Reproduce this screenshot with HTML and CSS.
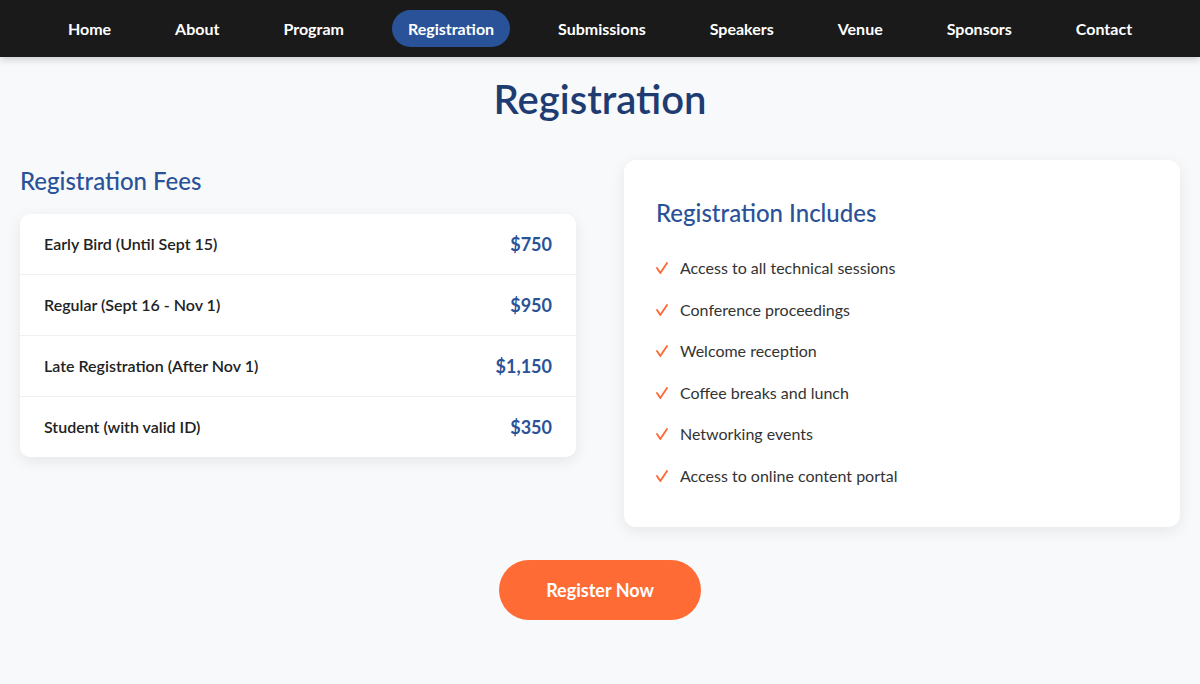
FILE: index.html
```html
<!DOCTYPE html>
<html lang="en">
<head>
<meta charset="utf-8">
<title>Registration</title>
<link rel="stylesheet" href="styles.css">
</head>
<body>
<nav class="nav">
  <a class="nav-link" href="#">Home</a>
  <a class="nav-link" href="#">About</a>
  <a class="nav-link" href="#">Program</a>
  <a class="nav-link active" href="#">Registration</a>
  <a class="nav-link" href="#">Submissions</a>
  <a class="nav-link" href="#">Speakers</a>
  <a class="nav-link" href="#">Venue</a>
  <a class="nav-link" href="#">Sponsors</a>
  <a class="nav-link" href="#">Contact</a>
</nav>
<main class="page">
  <h1 class="title">Registration</h1>
  <div class="columns">
    <section class="fees">
      <h3 class="sub">Registration Fees</h3>
      <div class="fee-card">
        <div class="fee-row"><span class="fee-label">Early Bird (Until Sept 15)</span><span class="fee-price">$750</span></div>
        <div class="fee-row"><span class="fee-label">Regular (Sept 16 - Nov 1)</span><span class="fee-price">$950</span></div>
        <div class="fee-row"><span class="fee-label">Late Registration (After Nov 1)</span><span class="fee-price">$1,150</span></div>
        <div class="fee-row"><span class="fee-label">Student (with valid ID)</span><span class="fee-price">$350</span></div>
      </div>
    </section>
    <section class="includes">
      <h3 class="sub">Registration Includes</h3>
      <ul class="inc-list">
        <li class="inc-item"><svg class="check" viewBox="0 0 12 12" width="12" height="12" aria-hidden="true"><path d="M1 6 L4.3 11 L11 1" fill="none" stroke="#ff6b35" stroke-width="1.9" stroke-linecap="round" stroke-linejoin="round"/></svg>Access to all technical sessions</li>
        <li class="inc-item"><svg class="check" viewBox="0 0 12 12" width="12" height="12" aria-hidden="true"><path d="M1 6 L4.3 11 L11 1" fill="none" stroke="#ff6b35" stroke-width="1.9" stroke-linecap="round" stroke-linejoin="round"/></svg>Conference proceedings</li>
        <li class="inc-item"><svg class="check" viewBox="0 0 12 12" width="12" height="12" aria-hidden="true"><path d="M1 6 L4.3 11 L11 1" fill="none" stroke="#ff6b35" stroke-width="1.9" stroke-linecap="round" stroke-linejoin="round"/></svg>Welcome reception</li>
        <li class="inc-item"><svg class="check" viewBox="0 0 12 12" width="12" height="12" aria-hidden="true"><path d="M1 6 L4.3 11 L11 1" fill="none" stroke="#ff6b35" stroke-width="1.9" stroke-linecap="round" stroke-linejoin="round"/></svg>Coffee breaks and lunch</li>
        <li class="inc-item"><svg class="check" viewBox="0 0 12 12" width="12" height="12" aria-hidden="true"><path d="M1 6 L4.3 11 L11 1" fill="none" stroke="#ff6b35" stroke-width="1.9" stroke-linecap="round" stroke-linejoin="round"/></svg>Networking events</li>
        <li class="inc-item"><svg class="check" viewBox="0 0 12 12" width="12" height="12" aria-hidden="true"><path d="M1 6 L4.3 11 L11 1" fill="none" stroke="#ff6b35" stroke-width="1.9" stroke-linecap="round" stroke-linejoin="round"/></svg>Access to online content portal</li>
      </ul>
    </section>
  </div>
  <div class="cta-wrap">
    <a class="cta" href="#">Register Now</a>
  </div>
</main>
</body>
</html>
```

FILE: styles.css
```css
* { box-sizing: border-box; }
html, body { margin: 0; padding: 0; }
body {
  font-family: Lato, "Noto Sans", sans-serif;
  background: #f8f9fa;
  color: #333;
  height: 684px;
  overflow: hidden;
}
.nav {
  background: #1a1a1a;
  height: 57px;
  display: flex;
  justify-content: center;
  align-items: center;
  gap: 32px;
  box-shadow: 0 2px 8px rgba(0,0,0,0.2);
  position: relative;
  z-index: 1;
}
.nav-link {
  color: #fff;
  text-decoration: none;
  font-weight: 700;
  font-size: 16px;
  line-height: 21px;
  padding: 8px 16px;
  border-radius: 20px;
}
.nav-link.active { background: #2a5298; }
.page { padding: 0 20px; }
.title {
  margin: 18px 0 0;
  text-align: center;
  font-size: 40px;
  line-height: 48px;
  font-weight: 600;
  color: #1e3c72;
}
.columns {
  display: grid;
  grid-template-columns: 1fr 1fr;
  gap: 48px;
  margin-top: 37px;
  align-items: start;
}
.sub {
  margin: 0;
  font-size: 24px;
  line-height: 30px;
  font-weight: 500;
  color: #2a5298;
}
.fees .sub { margin: 6px 0 18px; }
.fee-card {
  background: #fff;
  border-radius: 10px;
  box-shadow: 0 4px 15px rgba(0,0,0,0.08);
  overflow: hidden;
}
.fee-row {
  display: flex;
  justify-content: space-between;
  align-items: center;
  height: 61px;
  padding: 0 24px 1px;
  border-bottom: 1px solid #f0f0f0;
}
.fee-row:last-child { border-bottom: none; height: 60px; }
.fee-label { font-size: 16px; font-weight: 600; color: #222; }
.fee-price { font-size: 18px; font-weight: 700; color: #2a5298; }
.includes {
  background: #fff;
  border-radius: 12px;
  box-shadow: 0 4px 15px rgba(0,0,0,0.08);
  padding: 38px 32px 30px;
}
.includes .sub { margin-bottom: 19px; }
.inc-list { list-style: none; margin: 0; padding: 0; }
.inc-item {
  font-size: 16px;
  line-height: 21px;
  padding: 10px 0 10.6px;
  color: #333;
  display: flex;
  align-items: center;
}
.check {
  flex: none;
  margin-right: 12px;
  margin-top: 1px;
}
.cta-wrap { display: flex; justify-content: center; margin-top: 33px; }
.cta {
  background: #ff6b35;
  color: #fff;
  text-decoration: none;
  font-weight: 700;
  font-size: 18px;
  line-height: 24px;
  height: 60px;
  width: 202px;
  display: flex;
  align-items: center;
  justify-content: center;
  border-radius: 30px;
}
```
